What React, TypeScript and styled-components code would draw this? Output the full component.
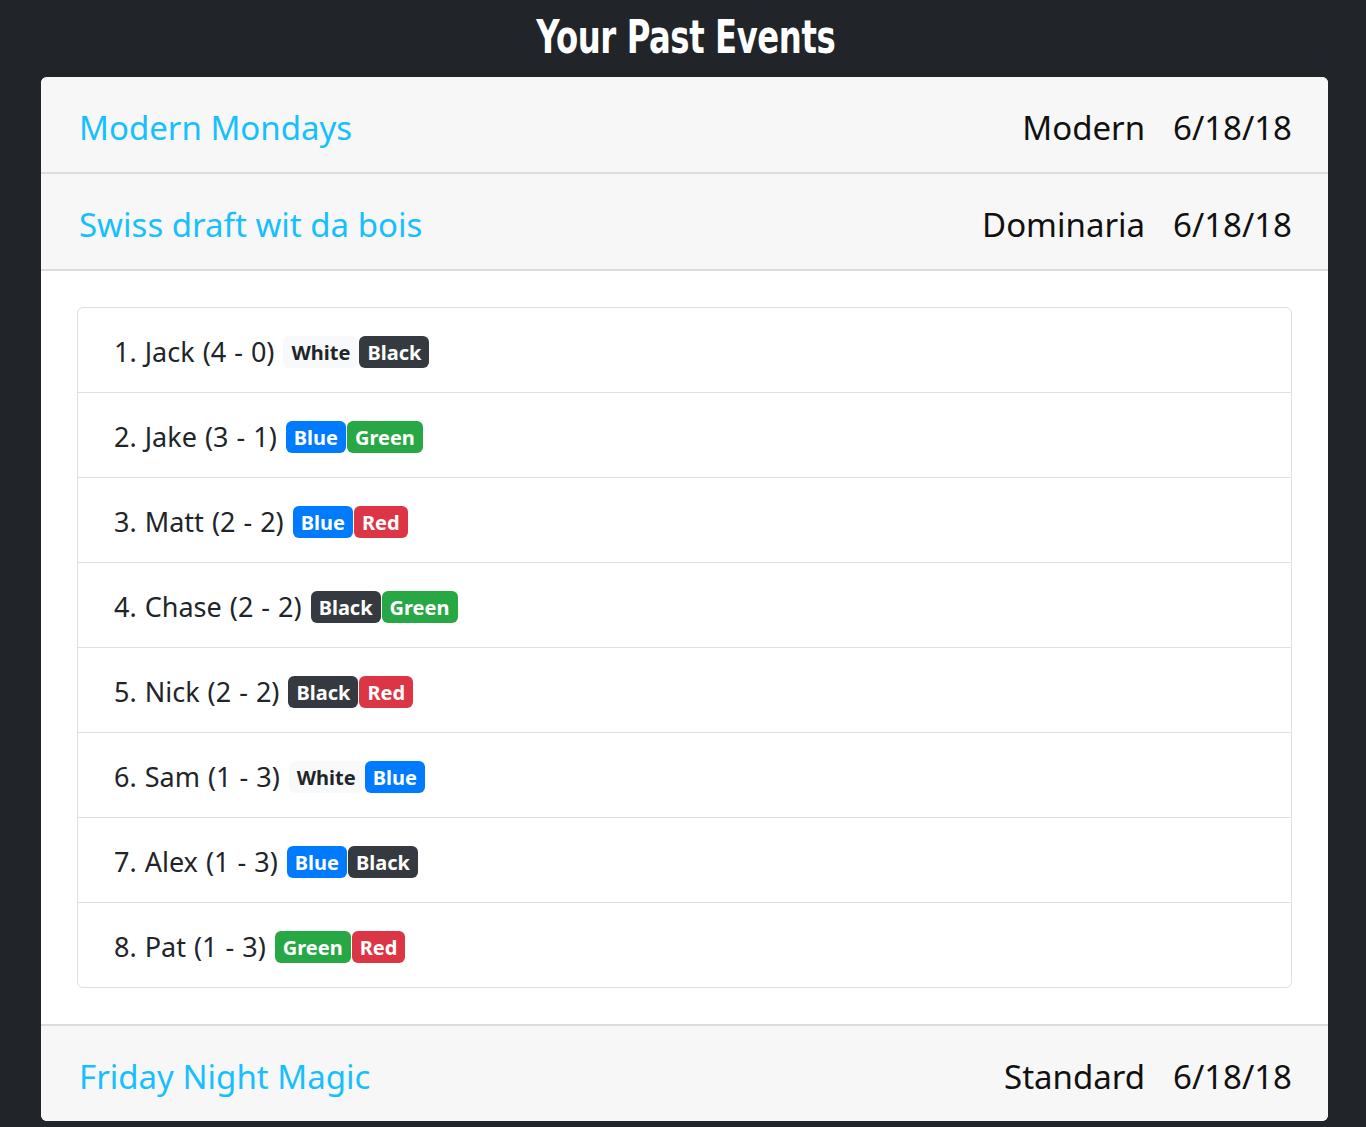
import React from "react";
import styled, { createGlobalStyle } from "styled-components";

const Global = createGlobalStyle`
  html, body { margin: 0; padding: 0; background: #212529; }
  body { font-family: "Noto Sans", "Open Sans", sans-serif; }
  * { box-sizing: border-box; }
`;

const Page = styled.div`
  padding: 0 38px 6px 41px;
`;

const Title = styled.h1`
  margin: 0;
  height: 77px;
  display: flex;
  align-items: center;
  justify-content: center;
  color: #fff;
  font-family: "DejaVu Sans Condensed", "DejaVu Sans", sans-serif;
  font-weight: 700;
  font-size: 46px;
  letter-spacing: -0.5px;
  padding: 0 0 4px 2px;
  & > span {
    display: inline-block;
    transform: scaleX(0.78);
  }
`;

const Card = styled.div`
  background: #fff;
  border-radius: 6px;
  overflow: hidden;
`;

const EventHeader = styled.div<{ $last?: boolean }>`
  height: 97px;
  background: #f7f7f7;
  display: flex;
  align-items: center;
  justify-content: space-between;
  padding: 5px 36px 0 38px;
  border-bottom: ${(p) => (p.$last ? "none" : "2px solid #dcdcdc")};
  border-top: ${(p) => (p.$last ? "2px solid #dcdcdc" : "none")};
`;

const EventName = styled.a`
  color: #17bfff;
  font-size: 33px;
  text-decoration: none;
  font-weight: 400;
`;

const Meta = styled.div`
  display: flex;
  gap: 28px;
  color: #111;
  font-size: 33px;
`;

const Body = styled.div`
  padding: 36px;
`;

const List = styled.div`
  border: 1px solid #dfdfdf;
  border-radius: 6px;
`;

const Row = styled.div`
  height: 85px;
  display: flex;
  align-items: center;
  padding: 2px 36px 0;
  border-top: 1px solid #dfdfdf;
  &:first-child { border-top: none; height: 84px; }
  color: #212529;
  font-size: 27px;
  word-spacing: 1px;
`;

const Label = styled.span`
  margin-right: 9px;
`;

const palette: Record<string, { bg: string; fg: string }> = {
  White: { bg: "#f8f9fa", fg: "#212529" },
  Black: { bg: "#343a40", fg: "#fff" },
  Blue: { bg: "#007bff", fg: "#fff" },
  Green: { bg: "#28a745", fg: "#fff" },
  Red: { bg: "#dc3545", fg: "#fff" },
};

const Badge = styled.span<{ $bg: string; $fg: string }>`
  display: inline-flex;
  align-items: center;
  height: 32px;
  padding: 0 8px;
  border-radius: 6px;
  background: ${(p) => p.$bg};
  color: ${(p) => p.$fg};
  font-weight: 700;
  font-size: 20px;
  word-spacing: 0;
  margin: 2px 1px 0 0;
`;

const events = [
  { name: "Modern Mondays", format: "Modern", date: "6/18/18" },
  { name: "Swiss draft wit da bois", format: "Dominaria", date: "6/18/18" },
];

const players: [string, string, string[]][] = [
  ["1. Jack", "(4 - 0)", ["White", "Black"]],
  ["2. Jake", "(3 - 1)", ["Blue", "Green"]],
  ["3. Matt", "(2 - 2)", ["Blue", "Red"]],
  ["4. Chase", "(2 - 2)", ["Black", "Green"]],
  ["5. Nick", "(2 - 2)", ["Black", "Red"]],
  ["6. Sam", "(1 - 3)", ["White", "Blue"]],
  ["7. Alex", "(1 - 3)", ["Blue", "Black"]],
  ["8. Pat", "(1 - 3)", ["Green", "Red"]],
];

export default function App() {
  return (
    <Page>
      <Global />
      <Title>
        <span>Your Past Events</span>
      </Title>
      <Card>
        {events.map((e) => (
          <EventHeader key={e.name}>
            <EventName href="#">{e.name}</EventName>
            <Meta>
              <span>{e.format}</span>
              <span>{e.date}</span>
            </Meta>
          </EventHeader>
        ))}
        <Body>
          <List>
            {players.map(([n, r, cs]) => (
              <Row key={n}>
                <Label>
                  {n} {r}
                </Label>
                {cs.map((c) => (
                  <Badge key={c} $bg={palette[c].bg} $fg={palette[c].fg}>
                    {c}
                  </Badge>
                ))}
              </Row>
            ))}
          </List>
        </Body>
        <EventHeader $last>
          <EventName href="#">Friday Night Magic</EventName>
          <Meta>
            <span>Standard</span>
            <span>6/18/18</span>
          </Meta>
        </EventHeader>
      </Card>
    </Page>
  );
}
